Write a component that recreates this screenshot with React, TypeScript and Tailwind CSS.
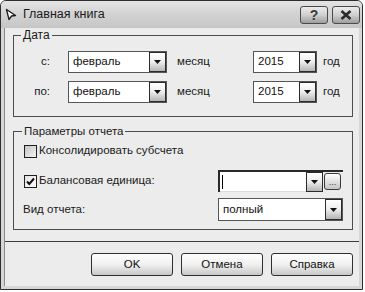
import React from 'react'

const font = "font-['Liberation_Sans',Arial,sans-serif]"

function Arrow() {
  return (
    <svg width="7" height="4" viewBox="0 0 7 4">
      <path d="M0 0h7L3.5 4z" fill="#111" />
    </svg>
  )
}

function DropBtn() {
  return (
    <div className="flex w-[17px] shrink-0 items-center justify-center border border-[#2b2b2b] bg-linear-to-b from-white via-[#ededed] to-[#b5b5b5]">
      <Arrow />
    </div>
  )
}

function Combo({ value, className }: { value: string; className: string }) {
  return (
    <div className={`flex items-stretch border border-[#555] bg-white ${className}`}>
      <span className="flex flex-1 items-center pl-[4px] text-[11.5px] text-[#111]">{value}</span>
      <DropBtn />
    </div>
  )
}

function CheckBox({ checked }: { checked?: boolean }) {
  return (
    <div
      className={`flex h-[13px] w-[13px] shrink-0 items-center justify-center border border-[#1f1f1f] ${
        checked ? 'bg-linear-to-br from-[#e2e2e2] to-white' : 'bg-linear-to-br from-[#c4c4c4] to-[#f4f4f4]'
      }`}
    >
      {checked && (
        <svg width="11" height="11" viewBox="0 0 11 11">
          <path d="M2 5.5L4.3 8L9 2.5" fill="none" stroke="#111" strokeWidth="2" />
        </svg>
      )}
    </div>
  )
}

function DateRow({ label }: { label: string }) {
  return (
    <div className="flex h-[22px] items-center">
      <span className="w-[36px] text-right">{label}</span>
      <Combo value="февраль" className="ml-[18px] h-[22px] w-[99px]" />
      <span className="ml-[10px] w-[76px]">месяц</span>
      <Combo value="2015" className="h-[22px] w-[64px]" />
      <span className="ml-[6px]">год</span>
    </div>
  )
}

function DlgButton({ children }: { children: React.ReactNode }) {
  return (
    <button className="h-[23px] w-[82px] rounded-[3px] border border-[#2f2f2f] bg-linear-to-b from-white via-[#f0f0f0] to-[#c8c8c8] text-[11.5px] text-[#111]">
      {children}
    </button>
  )
}

export default function App() {
  return (
    <div className={`h-[292px] w-[365px] bg-white text-[11.5px] text-[#1a1a1a] ${font}`}>
      <div className="flex h-[290px] w-[363px] flex-col overflow-hidden rounded-t-[6px] border border-[#2e2e2e] bg-[#d6d6d6]">
        {/* title bar */}
        <div className="flex h-[27px] shrink-0 items-center bg-linear-to-b from-[#e4e4e4] via-[#d2d2d2] to-[#c6c6c6] pl-[4px] pr-[2px]">
          <svg width="12" height="13" viewBox="0 0 12 13">
            <path d="M1.5 1.5L10.5 7.5L6.5 8L4 11.5Z" fill="#fff" stroke="#1a1a1a" strokeWidth="1.3" strokeLinejoin="round" />
          </svg>
          <span className="ml-[6px] text-[12.5px] text-[#1a1a1a]">Главная книга</span>
          <div className="ml-auto flex gap-[4px]">
            <div className="flex h-[18px] w-[28px] items-center justify-center rounded-[3px] border border-[#4a4a4a] bg-linear-to-b from-[#ececec] via-[#cfcfcf] to-[#9e9e9e] text-[14px] font-bold leading-none text-[#3a3a3a]">
              ?
            </div>
            <div className="flex h-[18px] w-[28px] items-center justify-center rounded-[3px] border border-[#4a4a4a] bg-linear-to-b from-[#ececec] via-[#cfcfcf] to-[#9e9e9e]">
              <svg width="12" height="10" viewBox="0 0 12 10">
                <path d="M1.5 1L10.5 9M10.5 1L1.5 9" stroke="#2a2a2a" strokeWidth="2.6" />
              </svg>
            </div>
          </div>
        </div>

        {/* body */}
        <div className="mx-[3px] mb-[3px] flex flex-1 flex-col border-l border-[#8a8a8a] bg-[#ececec]">
          <fieldset className="ml-[8px] mr-[6px] border border-[#4d4d4d] pb-[13px]">
            <legend className="ml-[7px] px-[2px] text-[12px] leading-[14px]">Дата</legend>
            <div className="flex flex-col gap-[8px] pt-[9px]">
              <DateRow label="с:" />
              <DateRow label="по:" />
            </div>
          </fieldset>

          <fieldset className="ml-[8px] mr-[6px] mt-[7px] border border-[#4d4d4d] pb-[8px]">
            <legend className="ml-[8px] px-[2px] leading-[14px]">Параметры отчета</legend>
            <div className="flex flex-col pt-[5px] pr-[9px]">
              <div className="flex h-[16px] items-center pl-[10px]">
                <CheckBox />
                <span className="ml-[2px]">Консолидировать субсчета</span>
              </div>
              <div className="mt-[11px] flex h-[22px] items-center pl-[10px]">
                <CheckBox checked />
                <span className="ml-[2px]">Балансовая единица:</span>
                <div className="ml-auto flex h-[22px] w-[125px] items-stretch border-l-2 border-t-2 border-[#2a2a2a]">
                  <div className="flex flex-1 items-center border-b border-[#dcdcdc] bg-white pl-[2px]">
                    <span className="h-[14px] w-px bg-black" />
                  </div>
                  <DropBtn />
                  <div className="ml-[1px] mt-[1px] flex h-[17px] w-[17px] items-end justify-center rounded-[3px] border border-[#3a3a3a] bg-linear-to-b from-white to-[#c4c4c4] pb-[2px] text-[9px] leading-none text-[#333]">
                    ...
                  </div>
                  <div className="w-[2px]" />
                </div>
              </div>
              <div className="mt-[6px] flex h-[23px] items-center pl-[9px]">
                <span>Вид отчета:</span>
                <Combo value="полный" className="ml-auto h-[23px] w-[125px]" />
              </div>
            </div>
          </fieldset>

          <div className="mt-[11px] border-t border-[#3c3c3c]" />

          <div className="flex justify-end gap-[8px] pr-[6px] pt-[11px]">
            <DlgButton>OK</DlgButton>
            <DlgButton>Отмена</DlgButton>
            <DlgButton>Справка</DlgButton>
          </div>
        </div>
      </div>
    </div>
  )
}
